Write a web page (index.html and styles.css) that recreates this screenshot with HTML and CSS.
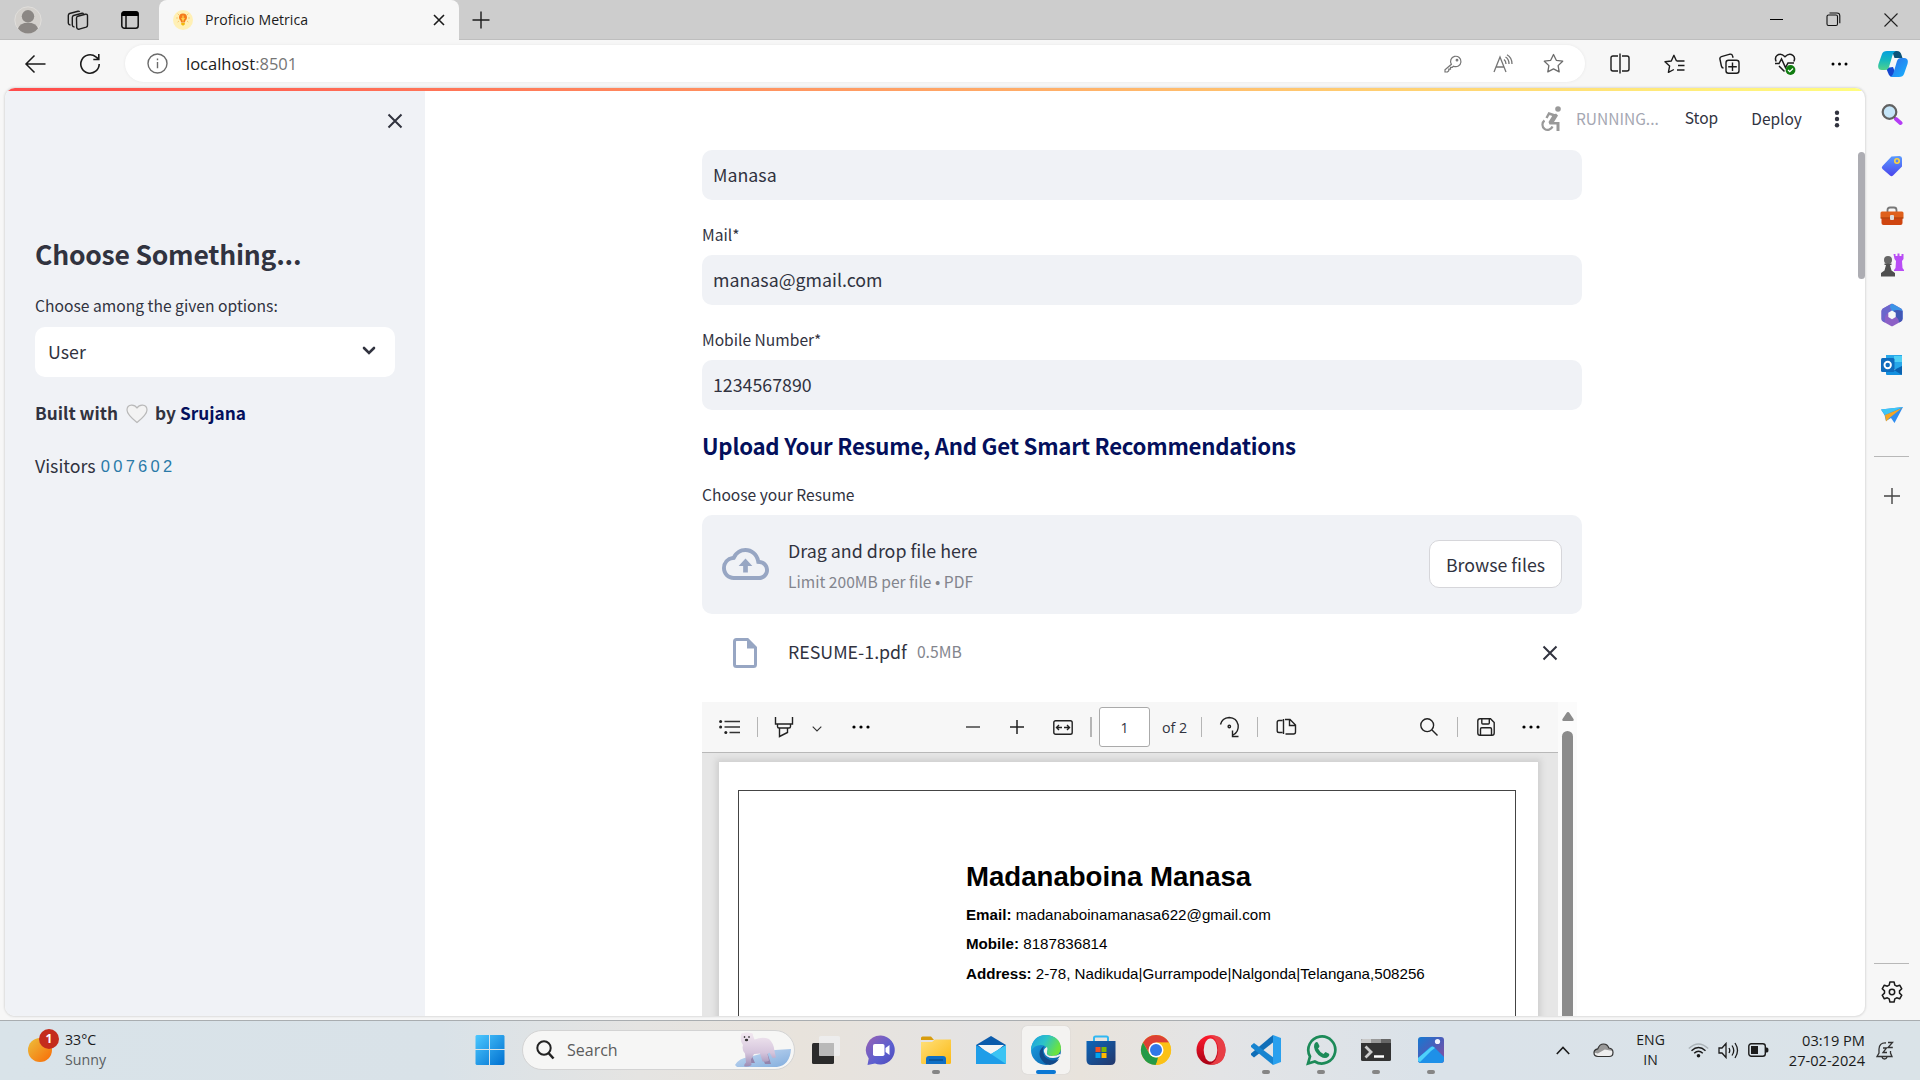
FILE: index.html
```html
<!DOCTYPE html>
<html lang="en">
<head>
<meta charset="utf-8">
<title>Proficio Metrica</title>
<link rel="stylesheet" href="styles.css">
</head>
<body>
<header class="titlebar">
  <span class="slot avatar-slot"><svg width="28" height="28" viewBox="0 0 28 28"><circle cx="14" cy="14" r="13.2" fill="#d3d0cc" stroke="#e0dedb"/><circle cx="14" cy="10.3" r="6.2" fill="#8b8784"/><path d="M4 22.500q2-5.800 10-5.800t10 5.800q-4 5-10 5t-10-5z" fill="#8b8784"/></svg></span>
  <span class="slot"><svg width="22" height="22" viewBox="0 0 22 22" fill="none" stroke="#1c1c1c" stroke-width="1.400" stroke-linejoin="round"><path d="M9.500 9.200q0-1.500 1.300-2l7.500-2q2-.3 2.200 1.500v9.500q0 1.500-1.300 2l-7 2q-2.200.3-2.500-1.500z"/><path d="M7.500 18q-2 0-2.200-1.800V8.500q0-1.500 1.300-2l8.500-2.300q1-.2 1.500.6"/><path d="M3.500 16q-2 0-2.200-1.800V6.500q0-1.500 1.300-2L11 2.200q1.200-.2 1.600.7"/></svg></span>
  <span class="slot tab-actions"><svg width="20" height="20" viewBox="0 0 20 20"><rect x="1.800" y="1.800" width="16.400" height="16.400" rx="2.500" fill="none" stroke="#111" stroke-width="1.500"/><path d="M1.500 6V4q0-2.700 2.700-2.700h11.600q2.700 0 2.700 2.700v2z" fill="#000"/><path d="M6 6v12" stroke="#111" stroke-width="1.500"/></svg></span>
  <div class="tab">
    <svg width="20" height="20" viewBox="0 0 20 20"><circle cx="10" cy="10" r="10" fill="#fff0b5"/><path d="M6 7.500a4 4 0 0 1 8 0q0 1.800-1.500 3l-.7 2H8.200l-.7-2Q6 9.300 6 7.500z" fill="#f47a1c"/><path d="M10 5.500v6M8.500 8l1.500 2 1.500-2" stroke="#ffd34d" stroke-width="1.200" fill="none"/><path d="M8.200 13h3.600v1.500l-1.800 1.300-1.800-1.300z" fill="#f0b90b"/><path d="M3.500 8h1M15.500 8h1M4.800 3.800l.8.800M15.200 3.800l-.8.800M4.800 12l.8-.7M15.200 12l-.8-.7" stroke="#f6a53a"/></svg>
    <span class="tab-title">Proficio Metrica</span>
    <svg class="tab-close" width="12" height="12" viewBox="0 0 12 12"><path d="M1 1l10 10M11 1L1 11" stroke="#1b1b1b" stroke-width="1.600"/></svg>
  </div>
  <span class="slot new-tab"><svg width="18" height="18" viewBox="0 0 18 18"><path d="M9 .5v17M.5 9h17" stroke="#1b1b1b" stroke-width="1.400"/></svg></span>
  <div class="window-buttons">
    <span class="slot"><svg width="14" height="14"><path d="M0 6.500h13" stroke="#000"/></svg></span>
    <span class="slot"><svg width="15" height="15" viewBox="0 0 15 15" fill="none" stroke="#111" stroke-width="1.100"><rect x="1" y="3" width="10.500" height="10.500" rx="1.500"/><path d="M3.500 1h7.500q2.800 0 2.800 2.800v7.500"/></svg></span>
    <span class="slot"><svg width="14" height="14"><path d="M.5.5l13 13M13.500.5l-13 13" stroke="#222" stroke-width="1.100"/></svg></span>
  </div>
</header>

<nav class="toolbar">
  <span class="slot back"><svg width="22" height="20" viewBox="0 0 22 20" fill="none" stroke="#1b1b1b" stroke-width="1.500"><path d="M10.500 1.500L2 10l8.500 8.500M2 10h19.500"/></svg></span>
  <span class="slot reload"><svg width="22" height="22" viewBox="0 0 22 22" fill="none" stroke="#1b1b1b" stroke-width="1.600"><path d="M20.200 11a9.200 9.200 0 1 1-3.300-7.100L19.600 6M19.800 1v5.500h-5.500"/></svg></span>
  <div class="address">
    <svg width="21" height="21" viewBox="0 0 21 21" fill="none" stroke="#6b6b6b" stroke-width="1.400"><circle cx="10.500" cy="10.500" r="9.500"/><path d="M10.500 9v6.200M10.500 5.500v1.700"/></svg>
    <span class="url">localhost<span class="port">:8501</span></span>
    <span class="slot"><svg width="18" height="18" viewBox="0 0 18 18" fill="none" stroke="#757575" stroke-width="1.200"><path d="M7.400 9.300A5.200 5.200 0 1 1 9.600 11.200L8.200 12.300H6.500v1.800H4.800v1.600L3.500 17H1v-2.300z"/><circle cx="13" cy="5.200" r=".8"/></svg></span>
    <span class="slot"><svg width="20" height="20" viewBox="0 0 20 20" fill="none" stroke="#757575" stroke-width="1.300"><path d="M1 18L7 3l6 15M3.200 13h7.700M11 5.500q2 1.500 2 4.500M12.500 3q3.500 2 3.500 7M14 .8q5 2.700 5 9.200"/></svg></span>
    <span class="slot"><svg width="21" height="21" viewBox="0 0 21 21" fill="none" stroke="#6b6b6b" stroke-width="1.300" stroke-linejoin="round"><path d="M10.500 1.500l2.800 5.800 6.400.9-4.600 4.400 1.100 6.300-5.700-3-5.700 3 1.100-6.300L1.300 8.200l6.400-.9z"/></svg></span>
  </div>
  <div class="tools">
    <span class="slot"><svg width="20" height="21" viewBox="0 0 20 21" fill="none" stroke="#1b1b1b" stroke-width="1.400"><path d="M10 .5v20M8 3H3Q1 3 1 5v11q0 2 2 2h5M12 3h5q2 0 2 2v11q0 2-2 2h-5"/></svg></span>
    <span class="slot"><svg width="21" height="20" viewBox="0 0 21 20" fill="none" stroke="#1b1b1b" stroke-width="1.400" stroke-linejoin="round"><path d="M12.500 7L9.900 1.300 7.300 7 1 7.800l4.600 4.300-1.200 6.300L9.900 15.500M12.500 7H20.500M14 11.500h6.500M13 16h7.500"/></svg></span>
    <span class="slot"><svg width="21" height="21" viewBox="0 0 21 21" fill="none" stroke="#1b1b1b" stroke-width="1.400"><rect x="7" y="7.200" width="13" height="13" rx="2.500"/><path d="M13.500 9.500v8.500M9.200 13.700h8.600M4.500 15Q2.800 15 2.400 13L.9 6Q.6 4.200 2.400 3.700l8.600-2.500q2-.4 2.500 1.500l.6 2"/></svg></span>
    <span class="slot"><svg width="22" height="22" viewBox="0 0 22 22" fill="none" stroke="#1b1b1b" stroke-width="1.500"><path d="M2.200 8.500Q.3 4.800 3.200 2.300 7-.3 11 3.800 15-.3 18.800 2.300q2.900 2.500 1 6.200M5 13l5.500 5.500"/><path d="M1 10.500h4l2.500-4.500 4 8.500 2.500-4.500h6"/><circle cx="16.500" cy="17" r="4.900" fill="#107c10" stroke="none"/><path d="M14 17l1.800 1.700 3.200-3.200" stroke="#fff" stroke-width="1.300"/></svg></span>
    <span class="slot"><svg width="17" height="4"><circle cx="2" cy="2" r="1.500"/><circle cx="8.500" cy="2" r="1.500"/><circle cx="15" cy="2" r="1.500"/></svg></span>
  </div>
  <span class="slot copilot"><svg width="30" height="28" viewBox="0 0 30 28"><defs><linearGradient id="cpA" x1="0" y1="0" x2="0" y2="1"><stop offset="0" stop-color="#05a0dd"/><stop offset=".5" stop-color="#17b9bd"/><stop offset="1" stop-color="#51d28b"/></linearGradient><linearGradient id="cpB" x1="0" y1="0" x2="1" y2="1"><stop offset="0" stop-color="#2f6be8"/><stop offset="1" stop-color="#17b4ff"/></linearGradient></defs><path d="M14 1h5q3.500 0 4.500 4l1 3h-8z" fill="#0c5378"/><path d="M8 18l3 7q1 2 4 2h4l-4-10z" fill="#1546cf"/><path d="M9 1h9q-3 1-4 6l-3 10q-1 3-4 3H4q-5 0-3.500-6L4 4q1-3 5-3z" fill="url(#cpA)"/><path d="M21 27h-9q3-1 4-6l3-10q1-3 4-3h3q5 0 3.500 6L26 24q-1 3-5 3z" fill="url(#cpB)"/></svg></span>
</nav>

<div class="workspace">
  <div class="page">
    <div class="loading"></div>
    <aside class="sidebar">
      <div class="sidebar-top"><svg width="16" height="16" viewBox="0 0 16 16"><path d="M1.500 1.500l13 13M14.500 1.500l-13 13" stroke="#31333f" stroke-width="2"/></svg></div>
      <h2 class="side-title">Choose Something...</h2>
      <p class="side-label">Choose among the given options:</p>
      <div class="select"><span>User</span><svg width="14" height="10" viewBox="0 0 14 10"><path d="M2 2l5 5 5-5" fill="none" stroke="#31333f" stroke-width="2.600" stroke-linecap="round"/></svg></div>
      <p class="built"><span>Built with</span><svg width="22" height="20" viewBox="0 0 22 20"><path d="M11 18.500Q1 10.500 1 6t4.500-4.800Q9 1 11 4q2-3 5.500-2.800Q21 1.500 21 6t-10 12.500z" fill="#f3f3f3" stroke="#b9b9b9" stroke-width="1.200"/></svg><span>by</span><a>Srujana</a></p>
      <p class="visitors"><span>Visitors</span><span class="counter">007602</span></p>
    </aside>
    <main class="main">
      <div class="app-header">
        <svg class="runner" width="22" height="26" viewBox="0 0 22 26" fill="none" stroke="#999"><circle cx="18" cy="3" r="2.800" fill="#999" stroke="none"/><path d="M6.500 12l2.500-4.500 6 2" stroke-width="2.400"/><path d="M16 7.500l2 2-4 6.500h5.500V25h-3v-6.500H9.500L8.500 16l4-6.500z" fill="#999" stroke="none"/><path d="M4.500 14.500a5.200 5.200 0 1 0 8 6" stroke-width="2.200"/></svg>
        <span class="running">RUNNING...</span>
        <span class="stop">Stop</span>
        <span class="deploy">Deploy</span>
        <svg class="kebab" width="6" height="18" fill="#31333f"><circle cx="3" cy="2.700" r="2.200"/><circle cx="3" cy="9" r="2.200"/><circle cx="3" cy="15.300" r="2.200"/></svg>
      </div>
      <div class="column">
        <div class="input">Manasa</div>
        <label class="label">Mail*</label>
        <div class="input">manasa@gmail.com</div>
        <label class="label">Mobile Number*</label>
        <div class="input">1234567890</div>
        <h3 class="upload-title">Upload Your Resume, And Get Smart Recommendations</h3>
        <label class="label resume-label">Choose your Resume</label>
        <section class="dropzone">
          <svg width="47" height="32" viewBox="0 0 24 16" preserveAspectRatio="none" fill="#97a6c3"><path d="M19.350 6.040A7.490 7.490 0 0 0 12 0C9.110 0 6.600 1.640 5.350 4.040A5.994 5.994 0 0 0 0 10c0 3.310 2.690 6 6 6h13c2.760 0 5-2.240 5-5 0-2.640-2.050-4.780-4.650-4.960zM19 14H6c-2.210 0-4-1.790-4-4 0-2.050 1.530-3.760 3.560-3.970l1.070-.11.500-.95A5.469 5.469 0 0 1 12 2c2.620 0 4.880 1.860 5.390 4.430l.3 1.500 1.530.11A2.980 2.980 0 0 1 22 11c0 1.650-1.350 3-3 3zM8.500 9h2.300v3.200h2.400V9h2.300L12 5.300z"/></svg>
          <div class="drop-text"><span class="drop-main">Drag and drop file here</span><span class="drop-hint">Limit 200MB per file • PDF</span></div>
          <button class="browse">Browse files</button>
        </section>
        <div class="file">
          <svg width="24" height="30" viewBox="0 0 24 30"><path d="M1.500 3.500q0-2 2-2h11l8 8v17q0 2-2 2h-17q-2 0-2-2z" fill="none" stroke="#97a6c3" stroke-width="3"/><path d="M14 1.500h1.500l7.500 8v1h-9z" fill="#97a6c3"/></svg>
          <span class="file-name">RESUME-1.pdf</span><span class="file-size">0.5MB</span>
          <svg class="file-remove" width="16" height="16" viewBox="0 0 16 16"><path d="M1.500 1.500l13 13M14.500 1.500l-13 13" stroke="#31333f" stroke-width="2"/></svg>
        </div>
        <section class="viewer">
          <div class="pdf">
            <div class="pdf-bar">
              <svg class="i-list" width="22" height="14" viewBox="0 0 22 14" fill="none" stroke="#333" stroke-width="1.400"><path d="M5.500 1.500H21M5.500 7H21M10.500 12.500H21"/><g fill="#222" stroke="none"><circle cx="1.600" cy="1.500" r="1.500"/><circle cx="1.600" cy="7" r="1.500"/><circle cx="6.800" cy="12.500" r="1.500"/></g></svg>
              <i class="sep s1"></i>
              <svg class="i-marker" width="20" height="22" viewBox="0 0 20 22" fill="none" stroke="#222" stroke-width="1.400"><path d="M1.500 1v7h17V1M3.500 8v2.500q0 1.500 1.500 1.500h10q1.500 0 1.500-1.500V8M5.500 12v8.500l8-4V12"/></svg>
              <svg class="i-down" width="10" height="6"><path d="M.7.700L5 5 9.300.700" fill="none" stroke="#333" stroke-width="1.100"/></svg>
              <svg class="i-more" width="18" height="4"><circle cx="2" cy="2" r="1.600"/><circle cx="9" cy="2" r="1.600"/><circle cx="16" cy="2" r="1.600"/></svg>
              <svg class="i-minus" width="14" height="4"><path d="M0 2h14" stroke="#444" stroke-width="1.500"/></svg>
              <svg class="i-plus" width="14" height="14"><path d="M0 7h14M7 0v14" stroke="#222" stroke-width="1.500"/></svg>
              <svg class="i-fit" width="20" height="15" viewBox="0 0 20 15" fill="none" stroke="#222" stroke-width="1.400"><rect x=".8" y=".8" width="18.400" height="13.400" rx="1.800"/><path d="M9 7.500H4M6 5L3.500 7.500 6 10M11 7.500h5M14 5l2.500 2.500L14 10"/></svg>
              <i class="sep s2"></i>
              <span class="page-no">1</span>
              <span class="page-total">of 2</span>
              <i class="sep s3"></i>
              <svg class="i-rotate" width="21" height="22" viewBox="0 0 21 22" fill="none" stroke="#222" stroke-width="1.400"><path d="M1.500 8.500q1.500-6.500 8.700-7 7.500.3 9 7.500.7 7-5.200 10M19.500 20.500h-6v-6"/><circle cx="10.300" cy="10.500" r="1.200"/></svg>
              <i class="sep s4"></i>
              <svg class="i-view" width="21" height="18" viewBox="0 0 21 18" fill="none" stroke="#222" stroke-width="1.400"><path d="M6.500 2.500H3q-1.800 0-1.800 1.800v8.400q0 1.800 1.800 1.800h3.500M7.500 1v15M9 1.500h5l5.500 5.500v7q0 2-2 2H9.500M13.500 2v5.500h6"/></svg>
              <svg class="i-find" width="18" height="18" viewBox="0 0 18 18" fill="none" stroke="#222" stroke-width="1.400"><circle cx="7.200" cy="7.200" r="6.400"/><path d="M12 12l5.500 5.500"/></svg>
              <i class="sep s5"></i>
              <svg class="i-save" width="18" height="18" viewBox="0 0 18 18" fill="none" stroke="#222" stroke-width="1.400"><path d="M3 .8h10.500l3.700 3.700V15q0 2.200-2.200 2.200H3Q.8 17.200.8 15V3Q.8.800 3 .8zM4.800 1v4q0 1 1 1h5.500q1 0 1-1V1M3.500 17v-6q0-1.200 1.200-1.200h8.600q1.200 0 1.200 1.200v6"/></svg>
              <svg class="i-more2" width="18" height="4"><circle cx="2" cy="2" r="1.600"/><circle cx="9" cy="2" r="1.600"/><circle cx="16" cy="2" r="1.600"/></svg>
            </div>
            <div class="pdf-canvas">
              <div class="sheet"><div class="frame">
                <h1 class="name">Madanaboina Manasa</h1>
                <p><b>Email:</b> madanaboinamanasa622@gmail.com</p>
                <p><b>Mobile:</b> 8187836814</p>
                <p><b>Address:</b> 2-78, Nadikuda|Gurrampode|Nalgonda|Telangana,508256</p>
              </div></div>
            </div>
          </div>
          <div class="pdf-scroll"><svg width="12" height="10"><path d="M6 0Q7 .2 7.500 1l4 6q.8 2-1 2h-9q-1.800 0-1-2l4-6Q5 .2 6 0z" fill="#8b8b8b"/></svg><i></i></div>
        </section>
      </div>
    </main>
    <i class="page-scroll"></i>
  </div>

  <aside class="edge-bar">
    <svg class="e1" width="22" height="22" viewBox="0 0 22 22"><path d="M13 13l3 3" stroke="#555" stroke-width="2"/><path d="M15 15l4.500 4" stroke="#b43cf5" stroke-width="4" stroke-linecap="round"/><circle cx="8.500" cy="8" r="6.800" fill="#c5e5f8" stroke="#616161" stroke-width="2.200"/></svg>
    <svg class="e2" width="22" height="22" viewBox="0 0 22 22"><defs><linearGradient id="tag" x1="0" y1="0" x2="0" y2="1"><stop offset="0" stop-color="#5a9bff"/><stop offset="1" stop-color="#4a45ec"/></linearGradient></defs><path d="M10.500 1.500l8-.5q2.500.2 2.500 2.500v8l-9 9q-1.500 1.300-3 0l-7.500-6.500Q0 12.500 1.500 11z" fill="url(#tag)"/><circle cx="16" cy="6" r="2.200" fill="none" stroke="#ffd43b" stroke-width="1.600"/></svg>
    <svg class="e3" width="24" height="20" viewBox="0 0 24 20"><path d="M7.500 6V4q0-2.500 2.500-2.500h4q2.500 0 2.500 2.500v2" fill="none" stroke="#777" stroke-width="1.800"/><path d="M1.500 10h21v7q0 2-2 2h-17q-2 0-2-2z" fill="#cf4510"/><rect x=".5" y="5.500" width="23" height="7" rx="1.500" fill="#df601c"/><path d="M.5 12h23" stroke="#a53808"/><rect x="10" y="9" width="4" height="5" rx="1" fill="#ddd"/></svg>
    <svg class="e4" width="24" height="24" viewBox="0 0 24 24"><path d="M13.500 1h2v2h2V.5h2V3h2V1h2v5l-1.500 2 .5 7 1.500 2v1h-10v-1l1.500-2 .5-7-1.500-2z" fill="#b94df5"/><circle cx="8" cy="7" r="4" fill="#666"/><path d="M4.500 10.500h7v1.500H10l1.500 5.500L15 20v3.500H1V20l3.500-2.500L6 12H4.500z" fill="#4f4f4f"/></svg>
    <svg class="e5" width="22" height="24" viewBox="0 0 22 24"><path d="M10 1Q11 .6 12 1l8 4.500q1.500 1 1.500 2.500v8q0 1.500-1.500 2.500L12 23q-1 .5-2 0l-8-4.500Q.5 17.500.5 16V8Q.5 6.500 2 5.500z" fill="#8c60c6"/><path d="M10 1Q11 .6 12 1l8 4.500q1.500 1 1.500 2.500v8l-7-2.500V10L11 8 6 9.500z" fill="#3c93e6"/><path d="M21.500 8v8q0 1.500-1.500 2.500l-2 1q0-4-3.500-6V10L12 8q4-2 9.500 0z" fill="#4257b5"/><path d="M10 1L2 5.500Q.5 6.500.5 8v8q0 1.500 1.500 2.500l2 1q-1-7 3-9.500 2-2 4-2L8.500 3z" fill="#6b66cc"/><path d="M11 7.500l3.700 2.200v4.400L11 16.300l-3.700-2.200V9.700z" fill="#f7f7f7"/></svg>
    <svg class="e6" width="22" height="22" viewBox="0 0 22 22"><rect x="5" y="1" width="16" height="14" fill="#28a8ea"/><rect x="13" y="2" width="8" height="6" fill="#50d0f5"/><path d="M5 12l9 4 7-4v8q0 1-1 1H6q-1 0-1-1z" fill="#1490df"/><path d="M21 12v9L13 16z" fill="#0a62b0"/><rect x="0" y="4" width="13.500" height="14" rx="1.500" fill="#0f6cbd"/><circle cx="6.700" cy="11" r="3.200" fill="none" stroke="#fff" stroke-width="1.900"/></svg>
    <svg class="e7" width="22" height="18" viewBox="0 0 22 18"><path d="M0 3.500L22 1l-8.500 16L10 12l-5 3-1.500-6z" fill="#2f8df0"/><path d="M0 3.500L22 1 4 9z" fill="#3ec6f5"/><path d="M4 9L21 2 9 11.500 5 15.500z" fill="#f5a623"/></svg>
    <hr class="e8">
    <svg class="e9" width="16" height="16"><path d="M8 0v16M0 8h16" stroke="#444" stroke-width="1.400"/></svg>
    <hr class="e10">
    <svg class="e11" width="22" height="22" viewBox="0 0 22 22" fill="none" stroke="#1b1b1b" stroke-width="1.500" stroke-linejoin="round"><path d="M8.900 1h4.200l.7 3.100 1.900 1.100 3-1 2.100 3.600-2.300 2.100v2.200l2.300 2.100-2.100 3.600-3-1-1.900 1.100-.7 3.100H8.900l-.7-3.100-1.900-1.100-3 1-2.100-3.600 2.300-2.100V9.900L1.200 7.800l2.100-3.600 3 1 1.900-1.100z"/><circle cx="11" cy="11" r="2.700"/></svg>
  </aside>
</div>

<footer class="taskbar">
  <div class="weather"><span class="sun"><b>1</b></span><span class="weather-text">33°C<br><span class="muted">Sunny</span></span></div>
  <svg class="start" width="30" height="32" viewBox="0 0 30 32" preserveAspectRatio="none"><defs><linearGradient id="win" x1="0" y1="0" x2="1" y2="1"><stop offset="0" stop-color="#4cc8ff"/><stop offset="1" stop-color="#0070d0"/></linearGradient></defs><path d="M1.500 1H14v14H.5V2zM15 1h13.500l1 1v13H15zM.5 16H14v15H1.500l-1-1zM15 16h14.500v14l-1 1H15z" fill="url(#win)"/></svg>
  <div class="search"><svg width="19" height="20" viewBox="0 0 19 20" fill="none" stroke="#222"><circle cx="8" cy="8" r="6.700" stroke-width="2"/><path d="M12.500 13l5 5.500" stroke-width="2.600"/></svg><span class="search-hint">Search</span>
    <svg class="bear" width="58" height="36" viewBox="0 0 58 36"><defs><linearGradient id="ice" x1="0" y1="0" x2="1" y2="1"><stop offset="0" stop-color="#c9dcf3"/><stop offset="1" stop-color="#82addd"/></linearGradient><linearGradient id="fur" x1="0" y1="0" x2="0" y2="1"><stop offset="0" stop-color="#f3e9f1"/><stop offset=".6" stop-color="#d5c5dc"/><stop offset="1" stop-color="#9c8cb4"/></linearGradient></defs><path d="M1 33q4-7 14-8l26-7 16-1q-1 16-14 18H3z" fill="url(#ice)"/><path d="M33 20l4 12h-6l-4-10zM17 22l4 9h-4l-3-8z" fill="#9485ad"/><path d="M7 3q0-2.500 2.500-2 3.500-1.500 7 0 3-.5 2.500 2.500l1.500 4q8-3 14.500-.5 5 4.500 5.500 12l1.500 6.500-3.500.5-3-5.500-2 1.500 1.500 6.500q-.5 1.500-6.500 1l-2.500-8-6 .5-3 5.500.5 5.500q-2 1.500-7 1.500-1-2 1.500-4l-1-9q-3.500-3.500-2-8.500Q6 10 7 3z" fill="url(#fur)"/><circle cx="10.500" cy="5" r=".8"/><circle cx="15" cy="5" r=".8"/><ellipse cx="12.500" cy="8" rx="1.700" ry="1.200" fill="#333"/></svg></div>
  <div class="apps">
    <span class="app"><svg width="32" height="32" viewBox="0 0 32 32"><rect x="2" y="9" width="22" height="21" rx="1.500" fill="#2b2b2b"/><rect x="9" y="2" width="21" height="20" rx="1.500" fill="#eee" fill-opacity=".92"/><path d="M9 9h15v13H9z" fill="#aaa" fill-opacity=".7"/></svg></span>
    <span class="app"><svg width="32" height="32" viewBox="0 0 32 32"><defs><linearGradient id="chat" x1="0" y1="0" x2="1" y2="1"><stop offset="0" stop-color="#9a62b3"/><stop offset=".6" stop-color="#5b5fd0"/><stop offset="1" stop-color="#4e48b8"/></linearGradient></defs><path d="M16 1.500a14.500 14.500 0 1 1-6 28L2.500 31l1.200-6.500A14.500 14.500 0 0 1 16 1.500z" fill="url(#chat)"/><rect x="8" y="10" width="11.500" height="12" rx="1.800" fill="#fff"/><path d="M20.500 14l4-3v10l-4-3z" fill="#fff"/></svg></span>
    <span class="app open"><svg width="32" height="32" viewBox="0 0 32 32"><path d="M1 4q0-1.500 1.500-1.500H11l3 3.500h-13z" fill="#d89c0c"/><defs><linearGradient id="fold" x1="0" y1="0" x2="1" y2="1"><stop offset="0" stop-color="#ffe07a"/><stop offset="1" stop-color="#fcb914"/></linearGradient></defs><path d="M1 8h11l3-2.500h16v23q0 1.500-1.500 1.500h-27Q1 30 1 28.500z" fill="url(#fold)"/><path d="M6 30v-5q0-3 3-3h14q3 0 3 3v5z" fill="#0f6fc5"/><path d="M9 26h14" stroke="#0a4f91" stroke-width="1.500"/></svg></span>
    <span class="app"><svg width="32" height="32" viewBox="0 0 32 32"><path d="M1 11L16 2l15 9v5H1z" fill="#0b5bab"/><path d="M3 11h26L16 22z" fill="#f5f5f5"/><path d="M1 11l15 9L31 11v18q0 1-1 1H1z" fill="#1e9de8"/><path d="M16 20L31 11v19z" fill="#3cc4f3"/></svg></span>
    <span class="app active"><svg width="32" height="32" viewBox="0 0 32 32"><defs><linearGradient id="edA" x1="0" y1="0" x2="1" y2=".4"><stop offset="0" stop-color="#1b9de2"/><stop offset=".5" stop-color="#2cc3c8"/><stop offset="1" stop-color="#6be33f"/></linearGradient><linearGradient id="edB" x1="0" y1="0" x2="1" y2="1"><stop offset="0" stop-color="#1aa5e8"/><stop offset="1" stop-color="#0c59a4"/></linearGradient></defs><circle cx="16" cy="16" r="15" fill="url(#edB)"/><path d="M1 15Q3 1 16 1q14 1 15 13 0 7-8 8-6 0-6-3 1-8-6-8Q4 11 1 17z" fill="url(#edA)"/><path d="M14 12q-6 4-4 11 3 7 10 8 6-1 9-6-6 3-11 0-5-3-5-8 0-3 1-5z" fill="#114a8b"/><path d="M17 13q-4 2-3 5 2 6 9 6 5 0 8-3-1-1-1-1-3 2-8 2-6 0-5-4 1-3 0-5z" fill="#f1f1f1"/></svg></span>
    <span class="app"><svg width="32" height="32" viewBox="0 0 32 32"><path d="M9 8V4q0-1.500 1.500-1.500h11Q23 2.500 23 4v4" fill="none" stroke="#31b8f2" stroke-width="2"/><defs><linearGradient id="shop" x1="0" y1="0" x2="1" y2="1"><stop offset="0" stop-color="#0c65b8"/><stop offset="1" stop-color="#24376b"/></linearGradient></defs><path d="M1.500 7h29v19q0 5-5 5h-19q-5 0-5-5z" fill="url(#shop)"/><path d="M10.500 13h5v5h-5z" fill="#f25022"/><path d="M16.500 13h5v5h-5z" fill="#7fba00"/><path d="M10.500 19h5v5h-5z" fill="#00a4ef"/><path d="M16.500 19h5v5h-5z" fill="#ffb900"/></svg></span>
    <span class="app"><svg width="32" height="32" viewBox="0 0 32 32"><circle cx="16" cy="16" r="15" fill="#fbc116"/><path d="M3 8.500a15 15 0 0 1 26 0H16l-6.500 11z" fill="#dd4033"/><path d="M3 8.500L9.500 20q3 4 8.500 3.500L16 31A15 15 0 0 1 3 8.500z" fill="#249a47"/><path d="M22.500 12.200L29 8.500H16v7z" fill="#dd4033"/><path d="M16 8.500h13a15 15 0 0 1-13.500 22.500l6.500-11.200z" fill="#fbc116"/><circle cx="16" cy="16" r="7.500" fill="#fff"/><circle cx="16" cy="16" r="6" fill="#3178e8"/></svg></span>
    <span class="app"><svg width="32" height="32" viewBox="0 0 32 32"><defs><linearGradient id="op" x1="0" y1="0" x2="0" y2="1"><stop offset="0" stop-color="#ff1b2d"/><stop offset="1" stop-color="#a70014"/></linearGradient></defs><ellipse cx="16" cy="16" rx="14.500" ry="14.800" fill="url(#op)"/><path d="M14 1.500Q30 0 30.500 16 30 32 14 30.500 23 28 23 16T14 1.500z" fill="#e83e45"/><ellipse cx="15.500" cy="16" rx="6.800" ry="11.500" fill="#e6e4e3"/></svg></span>
    <span class="app open"><svg width="32" height="32" viewBox="0 0 32 32"><path d="M23 1v7.500L4 23.500l-3-2.500v-1.500z" fill="#0f6eb8"/><path d="M1 11.500L4 9l20 15-1 7L1 13z" fill="#1684d0"/><path d="M23 1l8 3v24l-8 3z" fill="#29a0ee"/></svg></span>
    <span class="app open"><svg width="32" height="32" viewBox="0 0 32 32"><path d="M3 29.500l2-7A13.500 13.500 0 1 1 9.800 27.500z" fill="none" stroke="#1c8a58" stroke-width="2.700"/><path d="M10 9q2-2 3 0l1.500 3q0 1-1.500 2.500 2 4 5.500 5.500l2-2 3.500 1.800q1 1-.5 2.700-3 3-8 0Q10 19 9 13q0-3 1-4z" fill="#1c8a58"/></svg></span>
    <span class="app open"><svg width="32" height="32" viewBox="0 0 32 32"><rect x="1" y="5" width="30" height="22" rx="1.500" fill="#333"/><path d="M1 9V6.500Q1 5 2.500 5H11v4z" fill="#c9c9c9"/><path d="M11 5h10v4H11z" fill="#999"/><path d="M21 5h8.500Q31 5 31 6.500V9H21z" fill="#666"/><path d="M5.500 12.500l5.500 5.500-5.500 5.500" fill="none" stroke="#ccc" stroke-width="2.800"/><path d="M14 22.500h10" stroke="#fff" stroke-width="2.500"/></svg></span>
    <span class="app open"><svg width="32" height="32" viewBox="0 0 32 32"><defs><linearGradient id="ph" x1="0" y1="0" x2="1" y2="1"><stop offset="0" stop-color="#157ad2"/><stop offset=".5" stop-color="#4c5cb9"/><stop offset="1" stop-color="#8d4f9e"/></linearGradient></defs><rect x="3" y="3" width="26" height="26" rx="3" fill="url(#ph)"/><path d="M3 24L15 13q2-1.500 4 0l10 10v3q0 3-3 3H6q-3 0-3-3z" fill="#1e90e8"/><path d="M5 28L16 17l4-3q-2.500-3-5 0L3 24v3z" fill="#4fd1fa"/><circle cx="22.500" cy="7.500" r="2.600" fill="#f1f4ff"/></svg></span>
  </div>
  <div class="tray">
    <svg class="r1" width="14" height="9"><path d="M.8 8L7 1.500 13.200 8" fill="none" stroke="#1b1b1b" stroke-width="1.600"/></svg>
    <svg class="r2" width="21" height="15" viewBox="0 0 21 15"><path d="M5 13.500q-4 0-4-3.800 0-3.200 3.800-3.900Q6.500 1 10.500 1t5.300 4q4.200.4 4.200 4.500t-4 4z" fill="#eee"/><path d="M4.800 5.800Q6.500 1 10.500 1t5.300 4q3 .4 4 3l-8-1.500-7 4L1 9.500q0-3 3.800-3.700z" fill="#999"/><path d="M5 13.500q-4 0-4-3.800 0-3.200 3.800-3.900Q6.500 1 10.500 1t5.300 4q4.200.4 4.200 4.500t-4 4z" fill="none" stroke="#333" stroke-width="1.200"/></svg>
    <span class="lang">ENG<br>IN</span>
    <svg class="r3" width="21" height="15" viewBox="0 0 21 15" fill="none" stroke-width="1.400"><path d="M.8 5.500q9.700-9 19.400 0" stroke="#aab2b7"/><path d="M3.500 7.800q7-6.500 14 0M6.200 10.300q4.300-4.300 8.600 0" stroke="#1b1b1b"/><circle cx="10.500" cy="12.800" r="1.800" fill="#1b1b1b"/></svg>
    <svg class="r4" width="21" height="17" viewBox="0 0 21 17" fill="none" stroke="#1b1b1b" stroke-width="1.300"><path d="M1 6h3l4-4.500v14L4 11H1zM11 6q1.500 2.500 0 5M14 3.500q3.500 5 0 10M17 1q5 7.500 0 15"/></svg>
    <svg class="r5" width="21" height="14" viewBox="0 0 21 14"><rect x=".8" y=".8" width="16.500" height="12.400" rx="2.500" fill="none" stroke="#1b1b1b" stroke-width="1.400"/><rect x="3" y="3" width="7" height="8" fill="#1b1b1b"/><path d="M18 4.500h1q1.500 0 1.500 2.500T19 9.500h-1z" fill="#1b1b1b"/></svg>
    <span class="clock">03:19 PM<br>27-02-2024</span>
    <svg class="r6" width="18" height="19" viewBox="0 0 18 19" fill="none" stroke="#333" stroke-width="1.300"><path d="M10 2Q3.500 1.500 3 8v4L1 15.500h15L14.500 12v-2M6 16q.5 2 2.500 2t2.500-2M12 1.500h4.500l-4.500 5h4.800M7 7h3.500L7 11.500h4"/></svg>
  </div>
</footer>
</body>
</html>
```
FILE: styles.css
```css
* { box-sizing: border-box; }
body { margin: 0; width: 1920px; height: 1080px; overflow: hidden; display: flex; flex-direction: column; background: #f7f7f7; color: #1b1b1b; font-family: "Open Sans", "Noto Sans", sans-serif; }
svg { display: block; flex: none; }
h1, h2, h3, p, hr { margin: 0; }
.slot { display: flex; align-items: center; justify-content: center; flex: none; }

/* browser chrome */
.titlebar { height: 40px; flex: none; display: flex; background: #cdcdcd; box-shadow: inset 0 -1px #bebebe; }
.titlebar > .slot { width: 53px; }
.titlebar > .avatar-slot { width: 51px; padding-left: 5px; }
.titlebar > .tab-actions { padding-right: 2px; }
.tab { width: 300px; margin-left: 2px; background: #f7f7f7; border-radius: 8px 8px 0 0; display: flex; align-items: center; padding: 0 14px; }
.tab-title { margin-left: 12px; font-size: 14.100px; padding-bottom: 1px; }
.tab-close { margin-left: auto; }
.titlebar > .new-tab { width: 43px; padding-bottom: 1px; }
.window-buttons { margin-left: auto; display: flex; padding: 0 1px 1px 0; }
.window-buttons .slot { width: 57px; }
.toolbar { height: 48px; flex: none; display: flex; align-items: center; padding-bottom: 1px; }
.back { width: 62px; padding-left: 8px; }
.reload { width: 63px; padding-right: 7px; }
.address { width: 1460px; height: 37px; background: #fff; border-radius: 19px; box-shadow: 0 0 3px #e6e6e6; display: flex; align-items: center; padding: 0 7px 0 22px; }
.url { margin-left: 18px; margin-right: auto; font-size: 16.500px; padding-bottom: 1px; }
.port { color: #757575; }
.address .slot { width: 50px; }
.tools { display: flex; margin-left: 7px; }
.tools .slot { width: 55px; }
.copilot { width: 52px; }

/* web page */
.workspace { height: 932px; flex: none; display: flex; }
.page { position: relative; width: 1860px; height: 928px; margin-left: 5px; border-radius: 10px; overflow: hidden; background: #fff; box-shadow: 0 0 2px 1px #dcdcdc; display: flex; color: #31333f; font-family: "Noto Sans CJK JP", sans-serif; }
.loading { position: absolute; left: 0; top: 0; width: 100%; height: 3px; background: linear-gradient(90deg, #ff4b4b, #fffd80); z-index: 2; }
.page-scroll { position: absolute; right: 0; top: 64px; width: 7px; height: 127px; border-radius: 4px; background: #adadb3; }
.sidebar { width: 420px; flex: none; background: #f0f2f6; padding: 0 30px; }
.sidebar-top { height: 141px; padding-top: 25px; display: flex; justify-content: flex-end; }
.sidebar-top svg { margin-right: -8px; }
.side-title { font-size: 26.500px; line-height: 50px; font-weight: 700; letter-spacing: -.22px; }
.side-label { margin-top: 12px; font-size: 15.650px; line-height: 30px; height: 36px; }
.select { height: 50px; width: 360px; background: #fff; border-radius: 10px; padding: 0 19px 2px 13px; display: flex; align-items: center; justify-content: space-between; font-size: 17.800px; }
.built { margin-top: 22px; height: 30px; display: flex; align-items: center; font-size: 17.250px; font-weight: 700; }
.built span, .built a { padding-bottom: 3px; }
.built svg { margin: 0 7px 0 8px; }
.built a { margin-left: 4px; color: #04105c; }
.visitors { margin-top: 22px; height: 30px; display: flex; align-items: center; font-size: 17.800px; }
.visitors span { padding-bottom: 2px; }
.visitors .counter { margin-left: 5px; padding: 0; color: #2a7aa8; font-family: "Liberation Sans", sans-serif; font-size: 16.500px; letter-spacing: 3.300px; }
.main { flex: 1; padding-left: 277px; }
.app-header { height: 62px; padding-bottom: 1px; display: flex; align-items: center; margin-left: -277px; padding-left: 1115px; font-size: 15.500px; }
.app-header span { padding-bottom: 1px; }
.running { margin-left: 14px; color: #a5a7b2; }
.app-header .stop { margin-left: 26px; padding-bottom: 3px; }
.deploy { margin-left: 33px; }
.kebab { margin-left: 32px; }
.column { width: 880px; }
.input { height: 50px; background: #f0f2f6; border-radius: 10px; padding: 0 11px 2px; display: flex; align-items: center; font-size: 17.800px; }
.label { display: block; height: 55px; padding-top: 19px; line-height: 30px; font-size: 15.600px; }
.upload-title { height: 70px; padding-top: 14px; line-height: 42px; font-size: 22.200px; font-weight: 700; letter-spacing: -.24px; color: #04105c; white-space: nowrap; }
.resume-label { height: 35px; padding-top: 0; margin-top: -1px; margin-bottom: 1px; }
.dropzone { height: 99px; background: #f0f2f6; border-radius: 10px; padding: 0 20px 1px; display: flex; align-items: center; }
.drop-text { margin-left: 19px; margin-right: auto; display: flex; flex-direction: column; padding-top: 2px; }
.drop-main { font-size: 17.850px; line-height: 31px; }
.drop-hint { font-size: 15.600px; line-height: 30px; color: #83858d; }
.browse { width: 133px; height: 48px; border: 1px solid #d6d6da; border-radius: 10px; background: #fff; color: inherit; font: 17.750px "Noto Sans CJK JP", sans-serif; padding: 0 0 1px; }
.file { height: 88px; padding: 0 24px 10px 31px; display: flex; align-items: center; }
.file-name { margin-left: 31px; font-size: 17.800px; padding-bottom: 4px; }
.file-size { margin-left: 10px; font-size: 15.700px; color: #83858d; padding-bottom: 3px; }
.file-remove { margin-left: auto; }

/* embedded document */
.viewer { display: flex; height: 320px; width: 875px; background: #fbfbfb; }
.pdf { width: 856px; font-family: "Open Sans", sans-serif; }
.pdf-bar { height: 51px; background: #f7f7f7; border-bottom: 1px solid #b8b8b8; display: flex; align-items: center; }
.pdf-bar .sep { width: 1px; height: 20px; background: #b5b5b5; flex: none; }
.i-list { margin-left: 17px; } .s1 { margin-left: 16px; } .i-marker { margin-left: 16px; } .i-down { margin: 3px 0 0 18px; }
.i-more { margin-left: 30px; } .i-minus { margin-left: 96px; } .i-plus { margin-left: 30px; } .i-fit { margin-left: 29px; }
.pdf-bar .s2 { margin-left: 17px; width: 2px; }
.page-no { width: 51px; height: 40px; margin-left: 7px; border: 1px solid #aaa; border-radius: 3px; background: #fff; font-size: 14px; display: flex; align-items: center; justify-content: center; flex: none; }
.page-total { margin-left: 12px; font-size: 14.300px; white-space: nowrap; }
.s3 { margin-left: 14px; } .i-rotate { margin-left: 17px; } .s4 { margin-left: 17px; } .i-view { margin-left: 18px; }
.i-find { margin-left: auto; } .s5 { margin-left: 19px; } .i-save { margin-left: 19px; } .i-more2 { margin: 0 18px 0 27px; }
.pdf-canvas { height: 269px; background: #e6e6e6; padding: 9px 20px 0 17px; overflow: hidden; }
.sheet { height: 300px; background: #fff; padding: 28px 22px 0 19px; box-shadow: 0 0 6px 3px #cfcfcf; }
.frame { height: 280px; border: 1px solid #444; border-bottom: 0; padding: 65px 0 0 227px; color: #000; font: 15.150px/29.500px "Liberation Sans", sans-serif; }
.name { font-size: 27.600px; line-height: 42px; margin-bottom: 1.600px; }
.pdf-scroll { width: 12px; margin-left: 4px; padding-top: 10px; }
.pdf-scroll i { display: block; margin-top: 9px; width: 11px; height: 300px; border-radius: 6px; background: #8b8b8b; }

/* browser side rail */
.edge-bar { width: 55px; padding: 16px 2px 0 0; display: flex; flex-direction: column; align-items: center; }
.edge-bar hr { width: 35px; border: 0; border-top: 1px solid #b8b8b8; }
.e2 { margin-top: 29px; } .e3 { margin-top: 29px; } .e4 { margin-top: 27px; } .e5 { margin-top: 26px; } .e6 { margin-top: 27px; } .e7 { margin-top: 30px; }
.e8 { margin-top: 32px; } .e9 { margin-top: 31px; } .e10 { margin-top: auto; } .e11 { margin: 17px 0 17px; }

/* taskbar */
.taskbar { height: 60px; flex: none; border-top: 1px solid #a9adb0; display: flex; align-items: center; padding-bottom: 1px; background: linear-gradient(90deg, #d9e3e9 0, #d9e2e8 440px, #e5e4e2 640px, #e8e3dc 800px, #e4e3e3 980px, #e8e3dc 1080px, #e3e4e6 1220px, #dae2e9 1440px, #dae3e8 100%); }
.weather { width: 474px; padding-left: 28px; display: flex; align-items: center; }
.sun { position: relative; width: 24px; height: 24px; border-radius: 50%; background: linear-gradient(135deg, #ecc03c, #f96a06); }
.sun b { position: absolute; left: 11px; top: -9px; width: 20px; height: 20px; border-radius: 50%; background: #c42b1c; color: #fff; font-size: 12px; line-height: 20px; text-align: center; }
.weather-text { margin-left: 13px; font-size: 14.200px; line-height: 20px; padding-bottom: 1px; }
.muted { color: #5a5e62; }
.start { margin-left: 1px; }
.search { margin-left: 17px; width: 273px; height: 40px; border-radius: 20px; background: #f6f6f5; border: 1px solid #d3d3d3; display: flex; align-items: center; padding-left: 13px; color: #5c5c5c; font-size: 16px; }
.search-hint { margin-left: 12px; }
.bear { margin: 0 2px 0 auto; }
.apps { display: flex; gap: 7px; margin-left: 7px; }
.app { position: relative; width: 48px; height: 48px; display: flex; align-items: center; justify-content: center; border-radius: 5px; }
.active { background: #f4f3f1; box-shadow: 0 0 1px #bbb; }
.open::after, .active::after { content: ""; position: absolute; left: 20px; bottom: 0; width: 8px; height: 4px; border-radius: 2px; background: #858585; }
.active::after { left: 14px; width: 20px; background: #0b78d4; }
.tray { margin-left: auto; display: flex; align-items: center; font-size: 14px; line-height: 20px; }
.r2 { margin-left: 23px; } .lang { margin-left: 22px; text-align: center; padding-bottom: 1px; } .r3 { margin-left: 23px; } .r4 { margin-left: 9px; } .r5 { margin-left: 9px; }
.clock { margin-left: 20px; text-align: right; font-size: 14.600px; padding-bottom: 1px; } .r6 { margin: 0 26px 0 11px; }
```
